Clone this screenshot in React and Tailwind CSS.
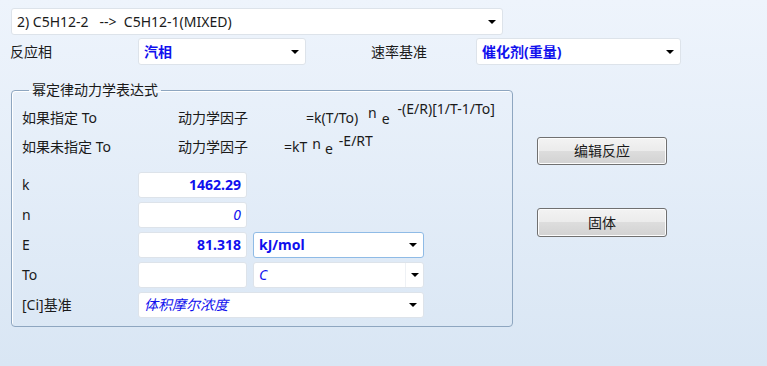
import React from "react";

function Arrow() {
  return (
    <span className="w-0 h-0 border-l-[4px] border-r-[4px] border-t-[4px] border-l-transparent border-r-transparent border-t-black" />
  );
}

function Select({ className, textClass, children, split }) {
  return (
    <div className={"flex items-center bg-white border rounded-[3px] " + className}>
      <span className={"flex-1 pl-[5px] whitespace-nowrap " + textClass}>{children}</span>
      {split ? (
        <span className="h-full w-[18px] border-l border-[#eef1f5] flex items-center justify-center">
          <Arrow />
        </span>
      ) : (
        <span className="pr-[6px] flex items-center">
          <Arrow />
        </span>
      )}
    </div>
  );
}

function Field({ children, className }) {
  return (
    <div className={"w-[109px] h-[26px] bg-white border border-[#dde3ea] rounded-[3px] flex items-center justify-end pr-[5px] text-[#1010ee] " + className}>
      {children}
    </div>
  );
}

export default function App() {
  return (
    <div className="w-[767px] h-[366px] overflow-hidden bg-gradient-to-b from-[#eef4fc] to-[#d9e6f4] text-[14px] leading-[20px] text-[#1a1a1a] font-['Noto_Sans','Noto_Sans_CJK_SC',sans-serif]">
      <div className="pt-2 pl-[11px]">
        <Select className="w-[492px] h-[27px] border-[#dde3ea]" textClass="pl-[5px]">
          2) C5H12-2&nbsp;&nbsp; --&gt;&nbsp; C5H12-1(MIXED)
        </Select>

        <div className="mt-[3px] flex items-center h-[27px]">
          <span className="w-[128px] -ml-px">反应相</span>
          <Select className="w-[168px] h-[27px] border-[#dde3ea]" textClass="text-[#1010ee] font-bold">
            汽相
          </Select>
          <span className="ml-[65px] w-[105px]">速率基准</span>
          <Select className="w-[205px] h-[27px] border-[#dde3ea]" textClass="text-[#1010ee] font-bold">
            催化剂(重量)
          </Select>
        </div>

        <div className="mt-[15px] flex">
          <fieldset className="w-[502px] h-[247px] border border-[#8ea6c0] rounded-[4px] pl-[10px] shadow-[inset_1px_1px_0_#ffffff]">
            <legend className="ml-[7px] px-[3px] leading-[20px]">幂定律动力学表达式</legend>

            <div className="mt-[8px] flex whitespace-nowrap">
              <span className="w-[156px]">如果指定 To</span>
              <span className="w-[128px]">动力学因子</span>
              <span className="w-[62px]">=k(T/To)</span>
              <span className="relative -top-[5px]">n</span>
              <span className="ml-[5px] relative top-[1px]">e</span>
              <span className="ml-[8px] relative -top-[9px]">-(E/R)[1/T-1/To]</span>
            </div>

            <div className="mt-[9px] flex whitespace-nowrap">
              <span className="w-[156px]">如果未指定 To</span>
              <span className="w-[106px]">动力学因子</span>
              <span>=kT</span>
              <span className="ml-[5px] relative -top-[3px]">n</span>
              <span className="ml-[4px] relative top-[2px]">e</span>
              <span className="ml-[6px] relative -top-[6px]">-E/RT</span>
            </div>

            <div className="mt-[15px] flex flex-col gap-[4px]">
              <div className="flex items-center">
                <span className="w-[116px]">k</span>
                <Field className="font-bold">1462.29</Field>
              </div>
              <div className="flex items-center">
                <span className="w-[116px]">n</span>
                <Field className="italic">0</Field>
              </div>
              <div className="flex items-center gap-[6px]">
                <span className="w-[110px]">E</span>
                <Field className="font-bold">81.318</Field>
                <Select className="w-[171px] h-[26px] border-[#8fbbe6]" textClass="text-[#1010ee] font-bold">
                  kJ/mol
                </Select>
              </div>
              <div className="flex items-center gap-[6px]">
                <span className="w-[110px]">To</span>
                <Field />
                <Select className="w-[171px] h-[26px] border-[#dde3ea]" textClass="text-[#1010ee] italic" split>
                  C
                </Select>
              </div>
              <div className="flex items-center">
                <span className="w-[116px]">[Ci]基准</span>
                <Select className="w-[286px] h-[26px] border-[#dde3ea]" textClass="text-[#1010ee] italic">
                  体积摩尔浓度
                </Select>
              </div>
            </div>
          </fieldset>

          <div className="ml-[24px] flex flex-col">
            <button className="mt-[57px] w-[130px] h-[28px] border border-[#707070] rounded-[3px] bg-[linear-gradient(#f3f3f3,#ebebeb_50%,#dddddd_50%,#d2d2d2)] text-[#1a1a1a] shadow-[inset_0_0_0_1px_#fcfcfc]">
              编辑反应
            </button>
            <button className="mt-[43px] w-[130px] h-[29px] border border-[#707070] rounded-[3px] bg-[linear-gradient(#f3f3f3,#ebebeb_50%,#dddddd_50%,#d2d2d2)] text-[#1a1a1a] shadow-[inset_0_0_0_1px_#fcfcfc]">
              固体
            </button>
          </div>
        </div>
      </div>
    </div>
  );
}
